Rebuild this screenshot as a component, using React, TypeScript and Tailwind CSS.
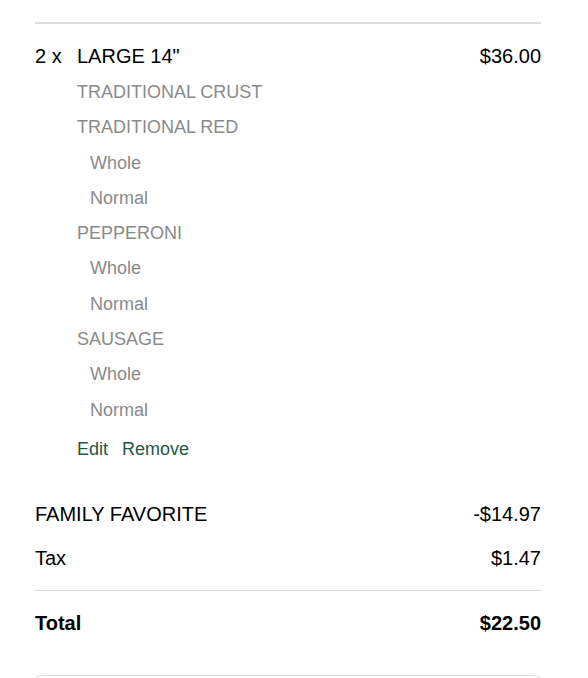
export default function App() {
  const subs: { label: string; indent?: boolean }[] = [
    { label: "TRADITIONAL CRUST" },
    { label: "TRADITIONAL RED" },
    { label: "Whole", indent: true },
    { label: "Normal", indent: true },
    { label: "PEPPERONI" },
    { label: "Whole", indent: true },
    { label: "Normal", indent: true },
    { label: "SAUSAGE" },
    { label: "Whole", indent: true },
    { label: "Normal", indent: true },
  ];

  return (
    <div
      className="bg-white pl-[35px] pr-[47px] pt-[22px] text-black"
      style={{ fontFamily: '"Liberation Sans", Arial, sans-serif' }}
    >
      <div className="border-t-2 border-[#dcdcdc] pt-[17px]">
        <div className="flex items-center justify-between text-[20px] leading-[30px]">
          <div className="flex">
            <span className="w-[42px]">2 x</span>
            <span>LARGE 14"</span>
          </div>
          <span>$36.00</span>
        </div>

        <div className="mt-[4px] pl-[42px] text-[18px] leading-[35.3px] text-[#8a8a8a]">
          {subs.map((s, i) => (
            <div key={i} className={s.indent ? "pl-[13px]" : ""}>
              {s.label}
            </div>
          ))}
          <div className="mt-[4px] flex gap-[14px] text-[#1f5744]">
            <button className="cursor-pointer">Edit</button>
            <button className="cursor-pointer">Remove</button>
          </div>
        </div>
      </div>

      <div className="mt-[32px] text-[20px]">
        <div className="flex justify-between leading-[30px]">
          <span>FAMILY FAVORITE</span>
          <span>-$14.97</span>
        </div>
        <div className="mt-[14px] flex justify-between leading-[30px]">
          <span>Tax</span>
          <span>$1.47</span>
        </div>
        <div className="mt-[17px] border-t border-[#d6d6d6]" />
        <div className="mt-[17px] flex justify-between font-bold leading-[30px]">
          <span>Total</span>
          <span>$22.50</span>
        </div>
      </div>

      <div className="mt-[37px] h-[10px] rounded-t-[6px] border border-b-0 border-[#dcdcdc]" />
    </div>
  );
}
